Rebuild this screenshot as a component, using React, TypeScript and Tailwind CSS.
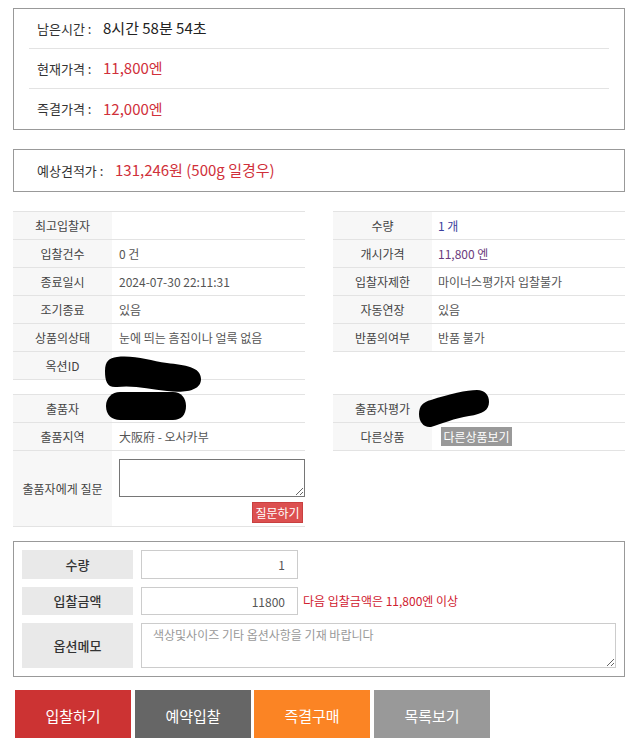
import React from 'react';

type Row = { label: string; value?: React.ReactNode; h?: string };

const FONT = "font-['Noto_Sans_CJK_KR','Noto_Sans',sans-serif]";

const InfoTable: React.FC<{ rows: Row[]; valuePad: string; className?: string }> = ({ rows, valuePad, className }) => (
  <div className={`w-[292px] border-t border-[#e3e3e3] ${className ?? ''}`}>
    {rows.map((r) => (
      <div key={r.label} className={`flex border-b border-[#e3e3e3] ${r.h ?? 'h-[28px]'}`}>
        <div className="w-[99px] shrink-0 bg-[#f7f7f7] flex items-center justify-center text-[12px] text-[#444]">
          {r.label}
        </div>
        <div className={`flex-1 flex items-center text-[12px] text-[#555] relative ${valuePad}`}>{r.value}</div>
      </div>
    ))}
  </div>
);

const Blob: React.FC<{ className: string; d: string; w: number; h: number }> = ({ className, d, w, h }) => (
  <svg className={`absolute ${className}`} width={w} height={h} viewBox={`0 0 ${w} ${h}`}>
    <path d={d} fill="black" />
  </svg>
);

const App: React.FC = () => {
  const leftTop: Row[] = [
    { label: '최고입찰자' },
    { label: '입찰건수', value: '0 건' },
    { label: '종료일시', value: '2024-07-30 22:11:31' },
    { label: '조기종료', value: '있음' },
    { label: '상품의상태', value: '눈에 띄는 흠집이나 얼룩 없음' },
    {
      label: '옥션ID',
      value: (
        <Blob
          className="left-[-7px] top-[3px] z-10"
          w={97}
          h={38}
          d="M12 2 C30 0 45 6 62 8 C80 10 96 12 96 24 C96 36 80 38 62 36 C45 34 28 30 12 32 C2 33 0 26 0 16 C0 6 4 3 12 2 Z"
        />
      ),
    },
  ];
  const rightTop: Row[] = [
    { label: '수량', value: <span className="text-[#3c3f9e]">1 개</span> },
    { label: '개시가격', value: <span className="text-[#6a3b7c]">11,800 엔</span> },
    { label: '입찰자제한', value: '마이너스평가자 입찰불가' },
    { label: '자동연장', value: '있음' },
    { label: '반품의여부', value: '반품 불가' },
  ];

  return (
    <div className={`w-[633px] min-h-[738px] bg-white pt-[8px] ${FONT}`}>
      {/* 남은시간 / 가격 */}
      <div className="ml-[13px] w-[612px] border border-[#999] px-[15px]">
        <div className="h-[40px] flex items-center pl-[8px] border-b border-[#e3e3e3]">
          <span className="w-[66px] text-[13px] text-[#333]">남은시간 :</span>
          <span className="text-[15px] text-[#222]">8시간 58분 54초</span>
        </div>
        <div className="h-[40px] flex items-center pl-[8px] border-b border-[#e3e3e3]">
          <span className="w-[66px] text-[13px] text-[#333]">현재가격 :</span>
          <span className="text-[15px] text-[#d0303a]">11,800엔</span>
        </div>
        <div className="h-[40px] flex items-center pl-[8px]">
          <span className="w-[66px] text-[13px] text-[#333]">즉결가격 :</span>
          <span className="text-[15px] text-[#d0303a]">12,000엔</span>
        </div>
      </div>

      <div className="ml-[13px] mt-[19px] w-[612px] h-[43px] border border-[#999] flex items-center pl-[23px]">
        <span className="w-[78px] text-[13px] text-[#333]">예상견적가 :</span>
        <span className="text-[15px] text-[#d0303a]">131,246원 (500g 일경우)</span>
      </div>

      {/* 상세 정보 */}
      <div className="mt-[19px] ml-[13px] flex items-start gap-[28px]">
        <InfoTable rows={leftTop} valuePad="pl-[7px]" />
        <InfoTable rows={rightTop} valuePad="pl-[6px]" />
      </div>

      <div className="mt-[14px] ml-[13px] flex items-start gap-[28px]">
        <InfoTable
          rows={[
            {
              label: '출품자',
              value: (
                <Blob
                  className="left-[-6px] top-[-3px] z-10"
                  w={81}
                  h={29}
                  d="M14 0 H67 C75 0 80 6 80 14 C80 23 75 28 67 28 H14 C6 28 0 23 0 14 C0 6 6 0 14 0 Z"
                />
              ),
            },
            { label: '출품지역', value: '大阪府 - 오사카부' },
            {
              label: '출품자에게 질문',
              h: 'h-[76px]',
              value: (
                <div className="w-full h-full flex flex-col items-end pt-[8px]">
                  <textarea className="block w-[186px] h-[38px] border border-[#767676] bg-white resize-y" />
                  <button className="mt-[5px] mr-[2px] w-[51px] h-[21px] bg-[#dc5050] border border-[#c94040] text-white text-[12px] leading-none">
                    질문하기
                  </button>
                </div>
              ),
            },
          ]}
          valuePad="pl-[7px]"
        />
        <InfoTable
          rows={[
            {
              label: '출품자평가',
              value: (
                <Blob
                  className="left-[-13px] top-[-5px] z-10"
                  w={71}
                  h={38}
                  d="M12 10 C30 4 48 0 58 0 C66 0 70 5 70 12 C70 20 64 24 50 26 C36 28 22 34 12 37 C5 38 0 32 0 24 C0 16 4 12 12 10 Z"
                />
              ),
            },
            {
              label: '다른상품',
              value: (
                <button className="ml-[3px] w-[71px] h-[19px] bg-[#999] text-white text-[12px] leading-none">
                  다른상품보기
                </button>
              ),
            },
          ]}
          valuePad="pl-[6px]"
        />
      </div>

      {/* 입찰 폼 */}
      <div className="ml-[13px] mt-[14px] w-[612px] border border-[#999] p-[8px] flex flex-col gap-[8px]">
        <div className="flex h-[29px]">
          <div className="w-[111px] bg-[#e9e9e9] flex items-center justify-center text-[13px] font-medium text-[#333]">수량</div>
          <input
            readOnly
            value="1"
            className="ml-[8px] w-[157px] h-full border border-[#ccc] text-right pr-[12px] text-[12px] text-[#555] outline-none"
          />
        </div>
        <div className="flex h-[28px] items-center">
          <div className="w-[111px] h-full bg-[#e9e9e9] flex items-center justify-center text-[13px] font-medium text-[#333]">입찰금액</div>
          <input
            readOnly
            value="11800"
            className="ml-[8px] w-[157px] h-full border border-[#ccc] text-right pr-[12px] text-[12px] text-[#555] outline-none"
          />
          <span className="ml-[5px] text-[12px] text-[#d0202f]">다음 입찰금액은 11,800엔 이상</span>
        </div>
        <div className="flex h-[45px]">
          <div className="w-[111px] bg-[#e9e9e9] flex items-center justify-center text-[13px] font-medium text-[#333]">옵션메모</div>
          <textarea
            placeholder="색상및사이즈 기타 옵션사항을 기재 바랍니다"
            className="ml-[8px] w-[475px] h-full border border-[#ccc] px-[11px] py-[2px] text-[12px] text-[#555] placeholder:text-[#999] outline-none"
          />
        </div>
      </div>

      <div className="mt-[13px] ml-[15px] flex">
        <button className="w-[116px] h-[52px] bg-[#cc3333] text-white text-[15px]">입찰하기</button>
        <button className="ml-[4px] w-[116px] h-[52px] bg-[#666] text-white text-[15px]">예약입찰</button>
        <button className="ml-[3px] w-[116px] h-[52px] bg-[#fb8424] text-white text-[15px]">즉결구매</button>
        <button className="ml-[4px] w-[116px] h-[52px] bg-[#999] text-white text-[15px]">목록보기</button>
      </div>
    </div>
  );
};

export default App;
